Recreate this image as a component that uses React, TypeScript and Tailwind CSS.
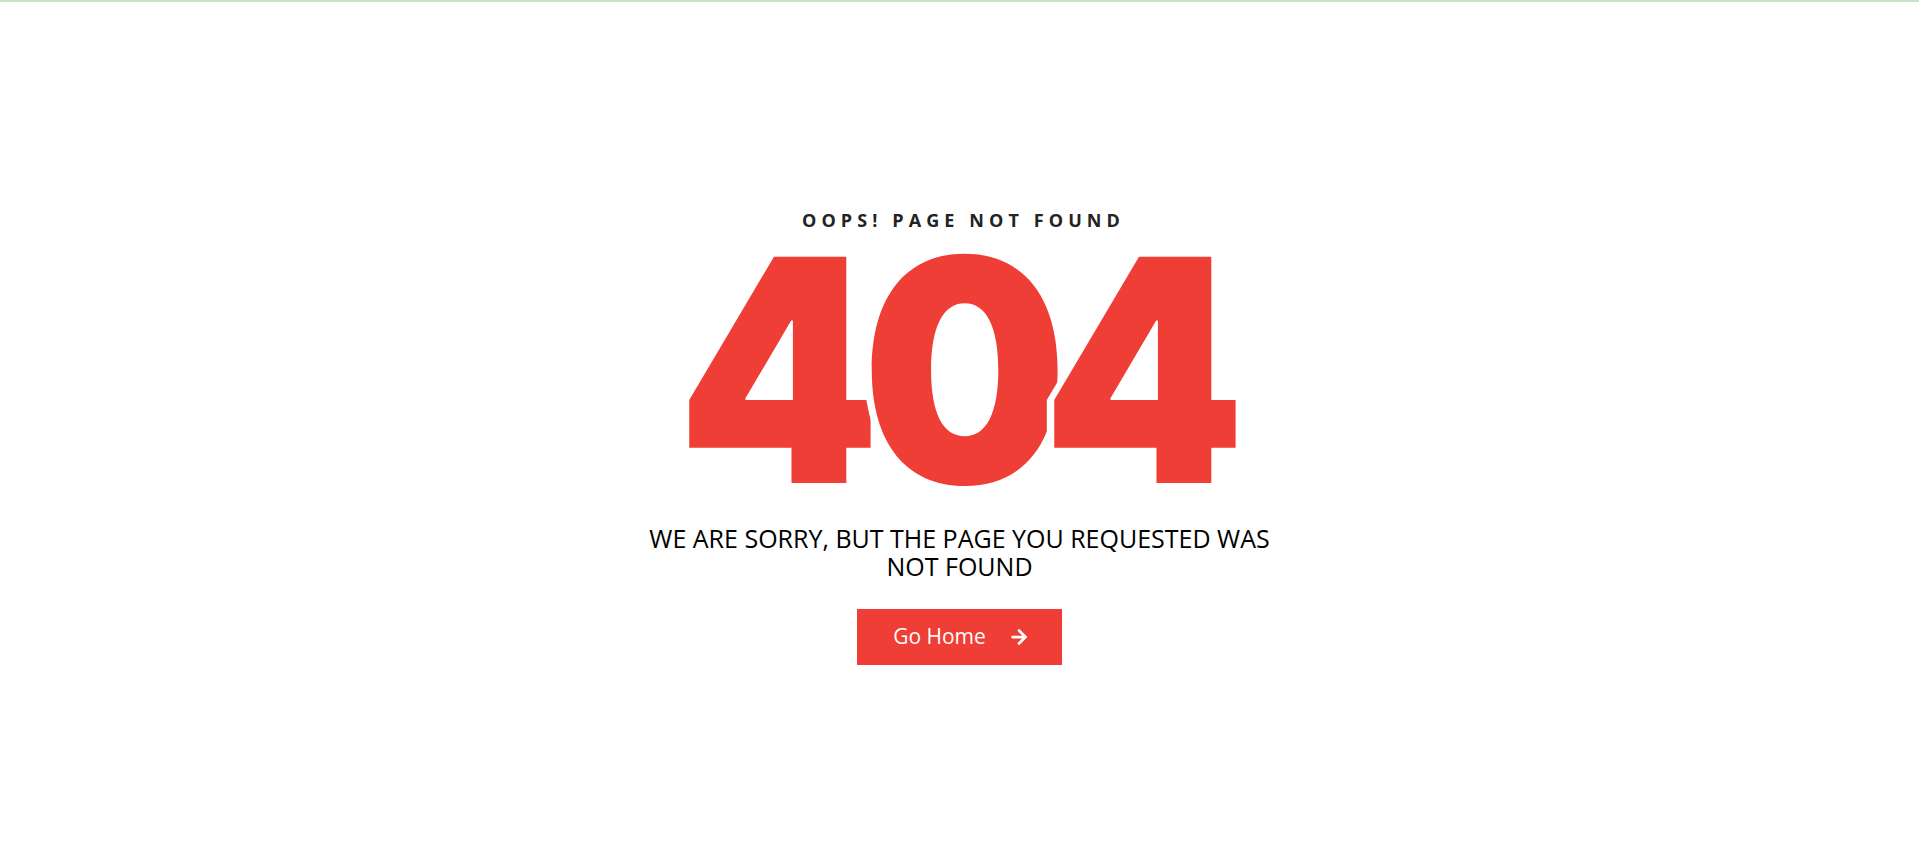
import React from 'react';
import { ArrowRight } from "lucide-react";

export default function App() {
  return (
    <div className="min-h-[866px] bg-white font-['Open_Sans',sans-serif]">
      <div className="h-[2px] bg-[#c3e6cb]" />

      <div className="flex flex-col items-center text-center pt-[206px]">
        <h3 className="text-[18px] leading-[24px] font-bold uppercase tracking-[5.1px] text-[#232323] pl-[8px]">
          Oops! Page not found
        </h3>

        <h1 className="flex justify-center font-['Inter',sans-serif] font-black text-[311px] leading-[250px] text-[#ef3e35] mt-[13px] ml-[4px] scale-x-[0.93] select-none">
          <span>4</span>
          <span className="-ml-[20px] [text-shadow:-8px_0_0_#fff]">0</span>
          <span className="-ml-[27px] [text-shadow:-8px_0_0_#fff]">4</span>
        </h1>

        <p className="max-w-[640px] mt-[29px] text-[25px] leading-[28px] uppercase text-black">
          We are sorry, but the page you requested was not found
        </p>

        <button className="mt-[29px] w-[205px] h-[56px] bg-[#ef3e35] text-white text-[21px] flex items-center justify-center gap-[22px] pl-[4px]">
          <span>Go Home</span>
          <ArrowRight className="w-[22px] h-[22px]" strokeWidth={3} />
        </button>
      </div>
    </div>
  );
}
